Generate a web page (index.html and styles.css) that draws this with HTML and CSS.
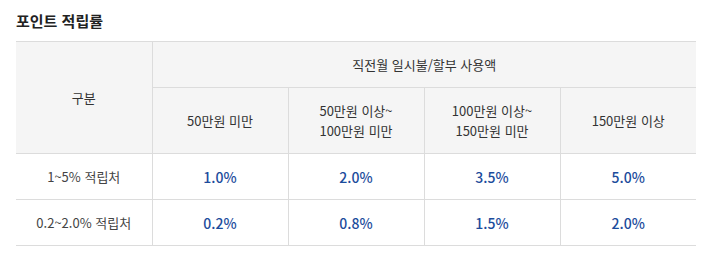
FILE: index.html
```html
<!DOCTYPE html>
<html lang="ko">
<head>
<meta charset="utf-8">
<link rel="stylesheet" href="styles.css">
</head>
<body>
<section class="rate">
  <h2 class="rate-title">포인트 적립률</h2>
  <table class="rate-table">
    <colgroup>
      <col class="c"><col class="c"><col class="c"><col class="c"><col class="c">
    </colgroup>
    <thead>
      <tr class="h1">
        <th rowspan="2">구분</th>
        <th colspan="4">직전월 일시불/할부 사용액</th>
      </tr>
      <tr class="h2">
        <th>50만원 미만</th>
        <th>50만원 이상~<br>100만원 미만</th>
        <th>100만원 이상~<br>150만원 미만</th>
        <th>150만원 이상</th>
      </tr>
    </thead>
    <tbody>
      <tr>
        <td class="label">1~5% 적립처</td>
        <td class="val">1.0%</td>
        <td class="val">2.0%</td>
        <td class="val">3.5%</td>
        <td class="val">5.0%</td>
      </tr>
      <tr>
        <td class="label">0.2~2.0% 적립처</td>
        <td class="val">0.2%</td>
        <td class="val">0.8%</td>
        <td class="val">1.5%</td>
        <td class="val">2.0%</td>
      </tr>
    </tbody>
  </table>
</section>
</body>
</html>
```
FILE: styles.css
```css
html, body {
  margin: 0;
  padding: 0;
  background: #fff;
}
body {
  font-family: "Noto Sans CJK KR", "Noto Sans", sans-serif;
  color: #333;
}
.rate {
  padding: 10px 16px 0;
}
.rate-title {
  margin: 0 0 9px;
  font-size: 15px;
  line-height: 22px;
  font-weight: 700;
  color: #222;
}
.rate-table {
  width: 680px;
  table-layout: fixed;
  border-collapse: collapse;
  border-left: hidden;
  border-right: hidden;
}
.rate-table .c {
  width: 136px;
}
.rate-table th,
.rate-table td {
  border: 1px solid #dcdcdc;
  padding: 0;
  text-align: center;
  vertical-align: middle;
  font-size: 13px;
  line-height: 20px;
  height: 45px;
}
.rate-table th {
  background: #f5f5f5;
  font-weight: 400;
  color: #333;
}
.rate-table .h2 th {
  height: 65px;
}
.rate-table .label {
  color: #444;
}
.rate-table .val {
  color: #1c4c9c;
  font-size: 14px;
  font-weight: 500;
}
```
